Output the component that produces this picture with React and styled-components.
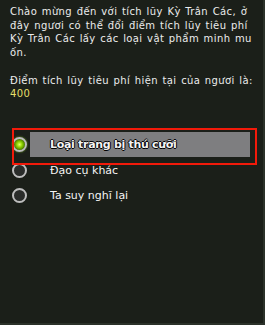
import React from 'react';
import styled, { createGlobalStyle } from 'styled-components';

const Global = createGlobalStyle`
  html, body {
    margin: 0;
    padding: 0;
    background: #1b1f19;
  }
`;

const Panel = styled.div`
  position: relative;
  box-sizing: border-box;
  width: 265px;
  height: 325px;
  padding: 5px 0 0 10px;
  background: #1b1f19;
  border-right: 2px solid #2b3129;
  border-bottom: 2px solid #2b3129;
  font-family: "DejaVu Sans", Verdana, sans-serif;
  overflow: hidden;
`;

const Message = styled.p`
  margin: 0;
  font-size: 10px;
  line-height: 13.7px;
  letter-spacing: 0.4px;
  word-spacing: 1px;
  white-space: nowrap;
  color: #ececec;
`;

const Points = styled.span`
  color: #e6df6a;
`;

const OptionList = styled.div`
  position: relative;
  margin-top: 31px;
  display: flex;
  flex-direction: column;
`;

const Row = styled.div`
  display: flex;
  align-items: center;
  height: 25.5px;
`;

const Radio = styled.span`
  box-sizing: border-box;
  flex: none;
  width: 15px;
  height: 15px;
  margin-left: 2px;
  border-radius: 50%;
  border: 2px solid #bdbdbd;
  background: ${p => p.$checked
    ? 'radial-gradient(circle, #e4ff6a 0%, #8ed400 35%, #3f6a00 75%)'
    : '#2a2c2a'};
  box-shadow: ${p => p.$checked ? '0 0 2px #7fbf20' : 'none'};
`;

const Label = styled.div`
  box-sizing: border-box;
  display: flex;
  align-items: center;
  height: 100%;
  margin-left: 3px;
  width: 220px;
  padding-left: 20px;
  background: ${p => p.$active ? '#7e7e80' : 'transparent'};
  font-size: 11px;
  font-weight: ${p => p.$active ? 'bold' : 'normal'};
  letter-spacing: ${p => p.$active ? '-0.3px' : '0'};
  color: #f4f4f4;
  text-shadow: ${p => p.$active
    ? '1px 0 0 #000, -1px 0 0 #000, 0 1px 0 #000, 0 -1px 0 #000'
    : 'none'};
`;

const Marker = styled.div`
  position: absolute;
  left: 2px;
  top: -4px;
  width: 245px;
  height: 37px;
  box-sizing: border-box;
  border: 2px solid #f21a0a;
  pointer-events: none;
`;

const greeting = [
  'Chào mừng đến với tích lũy Kỳ Trân Các, ở',
  'đây ngươi có thể đổi điểm tích lũy tiêu phí',
  'Kỳ Trân Các lấy các loại vật phẩm minh mu',
  'ốn.',
];

const options = [
  'Loại trang bị thú cưỡi',
  'Đạo cụ khác',
  'Ta suy nghĩ lại',
];

export default function App() {
  return (
    <>
      <Global />
      <Panel>
        <Message>
          {greeting.map((line, i) => (
            <React.Fragment key={i}>
              {line}
              {i < greeting.length - 1 && <br />}
            </React.Fragment>
          ))}
        </Message>
        <Message style={{ marginTop: '13.7px' }}>
          Điểm tích lũy tiêu phí hiện tại của ngươi là:
          <br />
          <Points>400</Points>
        </Message>
        <OptionList>
          {options.map((text, i) => (
            <Row key={text}>
              <Radio $checked={i === 0} />
              <Label $active={i === 0}>{text}</Label>
            </Row>
          ))}
          <Marker />
        </OptionList>
      </Panel>
    </>
  );
}
